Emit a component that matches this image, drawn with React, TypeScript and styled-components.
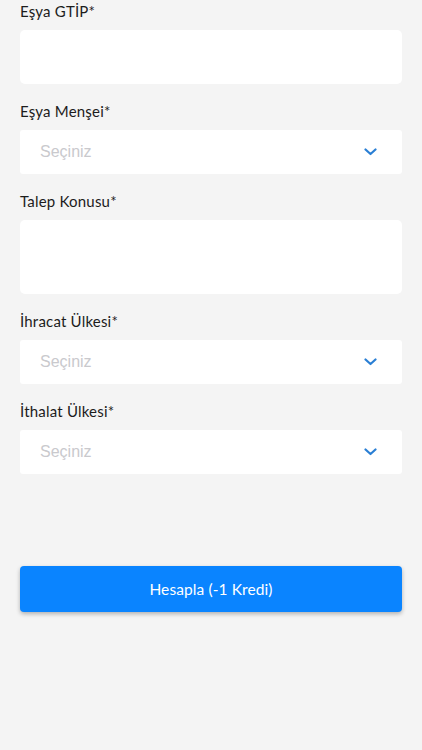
import styled, { createGlobalStyle } from "styled-components"

const GlobalStyle = createGlobalStyle`
  html, body {
    margin: 0;
    padding: 0;
    background: #f4f4f4;
  }
  * { box-sizing: border-box; }
`

const Page = styled.div`
  min-height: 750px;
  background: #f4f4f4;
  padding: 1px 20px 0;
  font-family: Lato, "Noto Sans", sans-serif;
`

const Form = styled.form`
  display: flex;
  flex-direction: column;
`

const Field = styled.div`
  display: flex;
  flex-direction: column;
  margin-bottom: 17px;
`

const Label = styled.label`
  font-size: 15px;
  line-height: 20px;
  color: #1c1c1c;
  margin-bottom: 9px;
  letter-spacing: 0.2px;
`

const Box = styled.div<{ $height: number }>`
  height: ${(p) => p.$height}px;
  background: #fff;
  border-radius: 5px;
`

const Select = styled.div`
  height: 44px;
  background: #fff;
  border-radius: 3px;
  display: flex;
  align-items: center;
  justify-content: space-between;
  padding: 0 25px 0 20px;
`

const Placeholder = styled.span`
  font-family: "Liberation Sans", Arial, sans-serif;
  font-size: 16px;
  color: #c9c9cd;
`

const Chevron = () => (
  <svg width="13" height="8" viewBox="0 0 13 8" fill="none">
    <path d="M1.5 1.5 L6.5 6 L11.5 1.5" stroke="#2a7fd4" strokeWidth="2.2" strokeLinecap="round" strokeLinejoin="round" />
  </svg>
)

const Submit = styled.button`
  margin-top: 75px;
  height: 46px;
  border: none;
  border-radius: 4px;
  background: #0a84ff;
  color: #fff;
  font-family: Lato, "Noto Sans", sans-serif;
  font-weight: 400;
  font-size: 15.5px;
  letter-spacing: 0.1px;
  box-shadow: 0 2px 4px rgba(0, 0, 0, 0.28);
`

const fields: { label: string; kind: "input" | "select" | "area" }[] = [
  { label: "Eşya GTİP*", kind: "input" },
  { label: "Eşya Menşei*", kind: "select" },
  { label: "Talep Konusu*", kind: "area" },
  { label: "İhracat Ülkesi*", kind: "select" },
  { label: "İthalat Ülkesi*", kind: "select" },
]

const App = () => {
  return (
    <Page>
      <GlobalStyle />
      <Form onSubmit={(e) => e.preventDefault()}>
        {fields.map((f) => (
          <Field key={f.label}>
            <Label>{f.label}</Label>
            {f.kind === "select" ? (
              <Select>
                <Placeholder>Seçiniz</Placeholder>
                <Chevron />
              </Select>
            ) : (
              <Box $height={f.kind === "input" ? 54 : 74} />
            )}
          </Field>
        ))}
        <Submit type="submit">Hesapla (-1 Kredi)</Submit>
      </Form>
    </Page>
  )
}

export default App
